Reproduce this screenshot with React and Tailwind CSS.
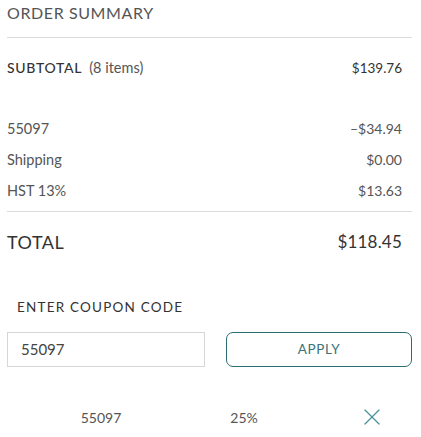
import { X } from "lucide-react";

function Row({ label, value }) {
  return (
    <div className="flex h-[31px] items-center justify-between pr-[10px] text-[#555]">
      <span className="text-[14.5px]">{label}</span>
      <span className="text-[14px]">{value}</span>
    </div>
  );
}

export default function App() {
  return (
    <div
      className="min-h-[437px] bg-white pl-[7px] pr-[9px] text-[#444]"
      style={{ fontFamily: "Lato, 'Liberation Sans', sans-serif" }}
    >
      <div className="flex h-[26px] items-center text-[16px] tracking-[0.6px] text-[#555]">
        ORDER SUMMARY
      </div>
      <div className="mt-[11px] h-px bg-[#dcdcdc]" />

      <div className="flex h-[60px] items-center justify-between pr-[10px]">
        <div className="flex items-baseline gap-[7px]">
          <span className="text-[14px] font-medium tracking-[0.7px] text-[#333]">SUBTOTAL</span>
          <span className="text-[14.5px] text-[#555]">(8 items)</span>
        </div>
        <span className="text-[13.5px] text-[#333]">$139.76</span>
      </div>

      <div className="pt-[15px]">
        <Row label="55097" value="–$34.94" />
        <Row label="Shipping" value="$0.00" />
        <Row label="HST 13%" value="$13.63" />
      </div>
      <div className="mt-[5px] h-px bg-[#dcdcdc]" />

      <div className="flex h-[60px] items-center justify-between pr-[10px] text-[#333]">
        <span className="text-[18px] tracking-[0.5px]">TOTAL</span>
        <span className="text-[17px] tracking-[0.2px]">$118.45</span>
      </div>

      <div className="mt-[25px] flex h-[20px] items-center pl-[10px] text-[13.5px] tracking-[1.2px] text-[#333]">
        ENTER COUPON CODE
      </div>

      <div className="mt-[15px] flex h-[35px] items-stretch gap-[21px]">
        <input
          readOnly
          value="55097"
          className="w-[198px] border border-[#d6d6d6] px-[13px] text-[15px] text-[#444] outline-none"
        />
        <button className="flex flex-1 items-center justify-center rounded-[7px] border border-[#2a6d72] text-[13.5px] tracking-[0.6px] text-[#3d7378]">
          APPLY
        </button>
      </div>

      <div className="flex h-[62px] items-end">
        <div className="flex h-[24px] w-full items-center text-[14px] text-[#555]">
          <span className="w-[188px] shrink-0 text-center">55097</span>
          <span className="w-[98px] shrink-0 text-center">25%</span>
          <span className="flex w-[119px] shrink-0 pl-[65px]">
            <X size={28} strokeWidth={1.1} className="text-[#4a9298]" />
          </span>
        </div>
      </div>
    </div>
  );
}
